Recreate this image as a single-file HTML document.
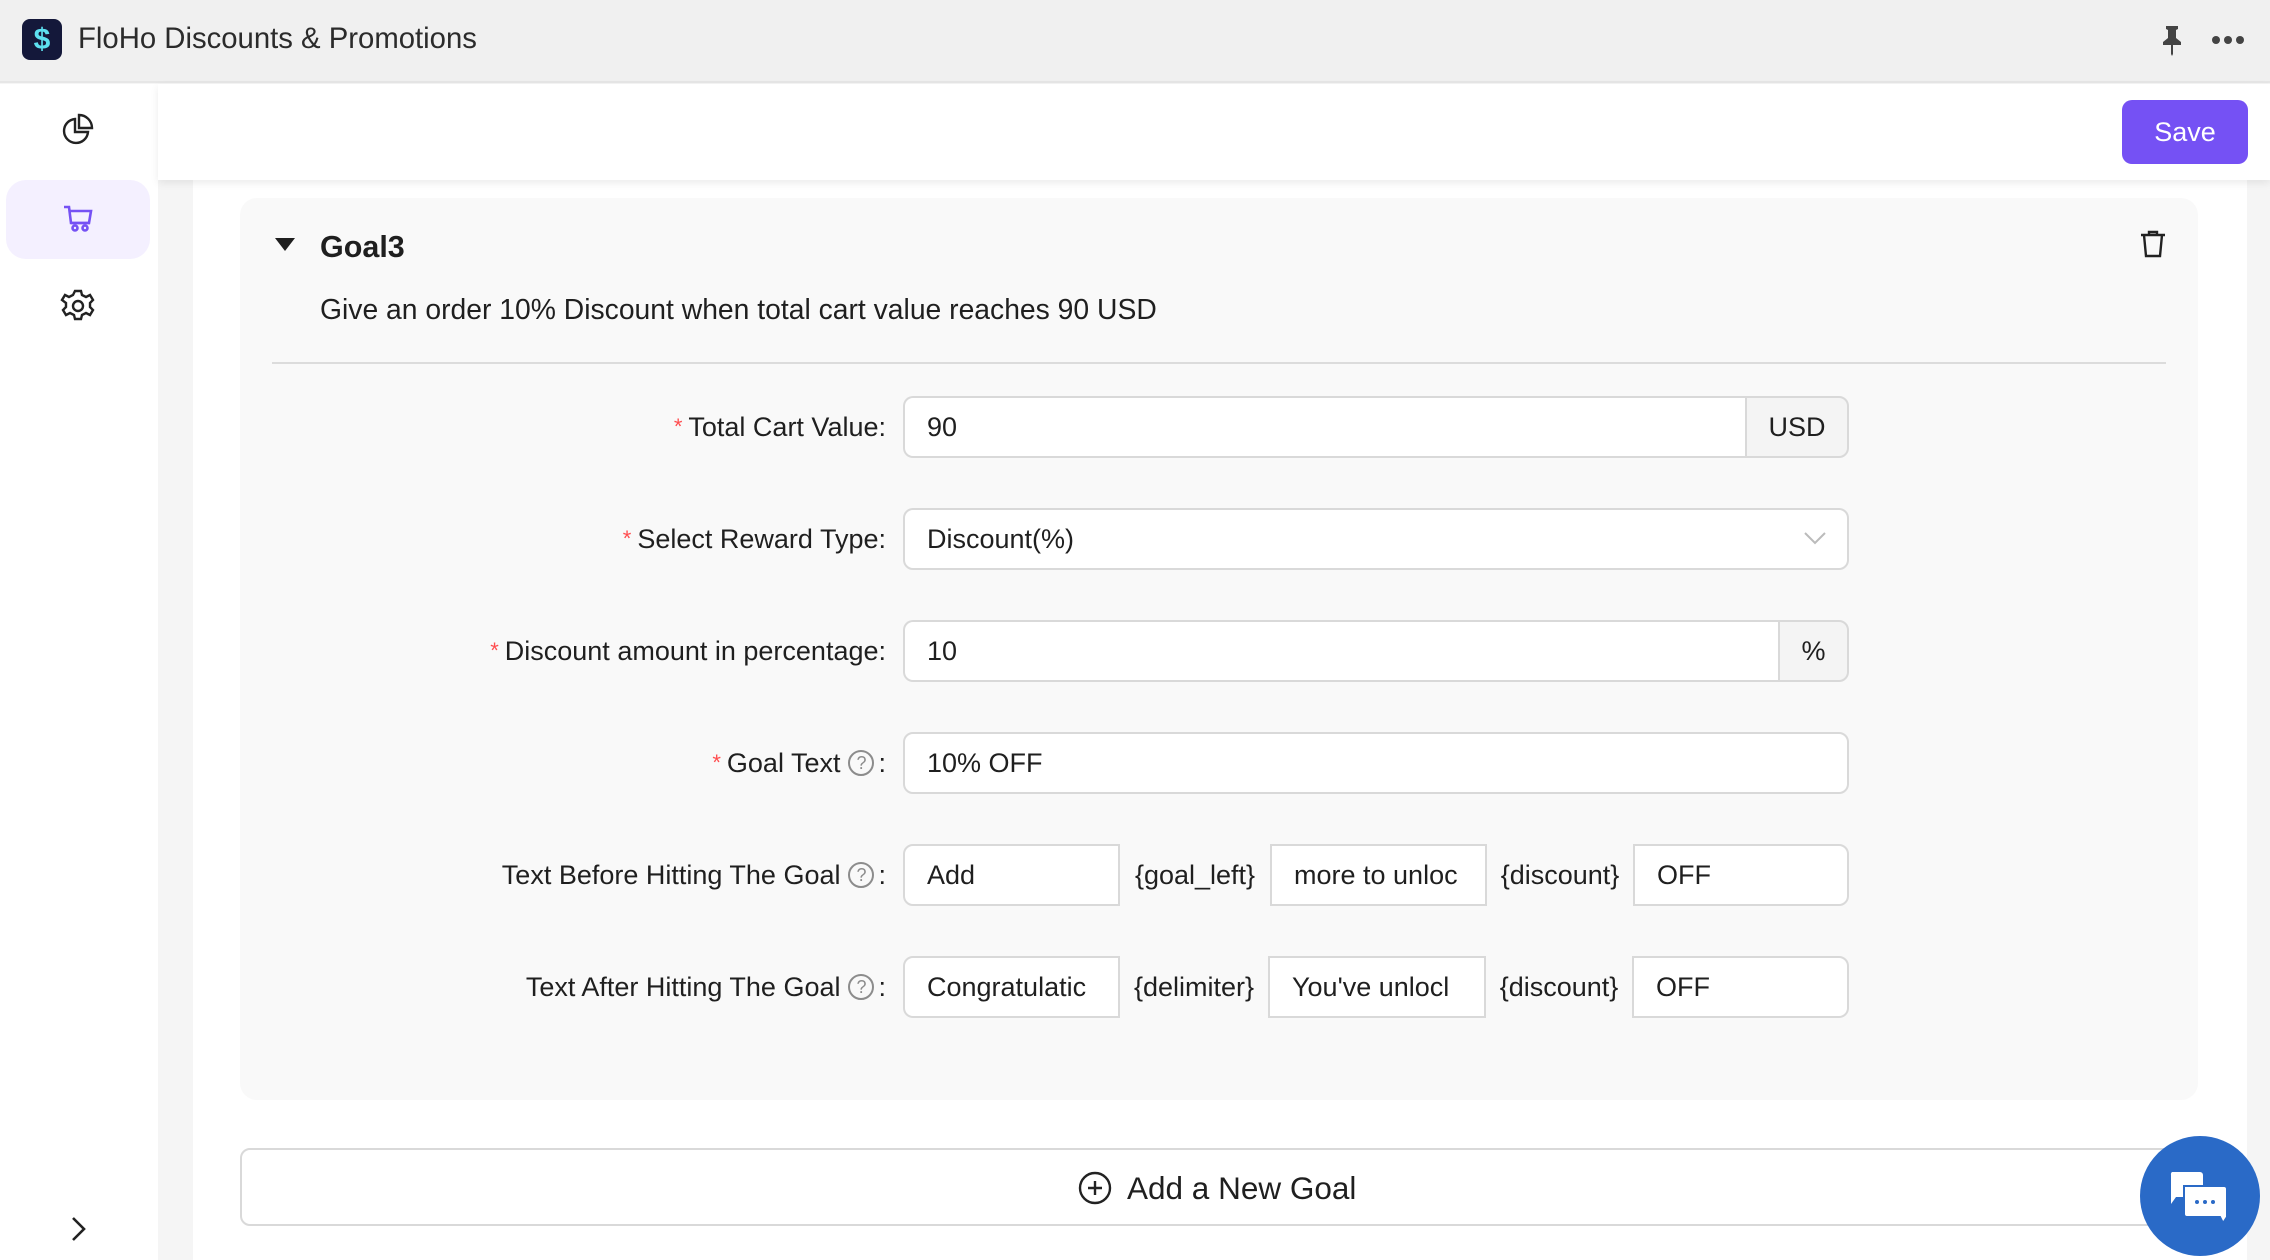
<!DOCTYPE html>
<html><head><meta charset="utf-8"><style>
*{box-sizing:border-box;margin:0;padding:0}
body{width:2270px;height:1260px;overflow:hidden;background:#f5f5f5;font-family:"Liberation Sans",sans-serif;color:#1f1f1f;position:relative}
.abs{position:absolute}
.topbar{left:0;top:0;width:2270px;height:83px;background:#f0f0f0;border-bottom:2px solid #e6e6e6}
.side{left:0;top:84px;width:158px;height:1176px;background:#fff}
.content{left:193px;top:180px;width:2054px;height:1080px;background:#fff}
.header{left:158px;top:84px;width:2112px;height:96px;background:#fff;box-shadow:0 3px 8px rgba(0,0,0,.08)}
.save{left:2122px;top:100px;width:126px;height:64px;background:#7551f4;border-radius:10px;color:#fff;font-size:27px;display:flex;align-items:center;justify-content:center}
.card{left:240px;top:198px;width:1958px;height:902px;background:#f9f9f9;border-radius:17px}
.lbl{right:1384px;font-size:27px;height:62px;display:flex;align-items:center;white-space:nowrap}
.req{color:#ff4d4f;margin-right:6px;font-size:22px}
.inp{height:62px;border:2px solid #d9d9d9;background:#fff;font-size:27px;display:flex;align-items:center;padding-left:22px;white-space:nowrap;overflow:hidden}
.addon{height:62px;border:2px solid #d9d9d9;background:#f4f4f4;font-size:27px;display:flex;align-items:center;justify-content:center;border-radius:0 10px 10px 0}
.tok{font-size:27px;height:62px;display:flex;align-items:center;justify-content:center}
.q{display:inline-block;width:26px;height:26px;border:2px solid #8c8c8c;border-radius:50%;color:#8c8c8c;font-size:18px;line-height:22px;text-align:center;margin:0 4px 0 8px}
</style></head><body>
<div class="abs topbar"></div>
<div class="abs" style="left:22px;top:19px;width:40px;height:41px;background:#14183a;border-radius:8px;color:#5ee0f0;font-weight:bold;font-size:30px;text-align:center;line-height:41px">$</div>
<div class="abs" style="left:78px;top:22px;font-size:29.3px;color:#2b2b2b">FloHo Discounts &amp; Promotions</div>
<svg class="abs" style="left:2158px;top:24px" width="28" height="32" viewBox="0 0 28 32"><path d="M8 2h12v3l-2 1v8l5 4v3H5v-3l5-4V6L8 5z M13 21h2v9l-1 2-1-2z" fill="#444"/></svg>
<div class="abs" style="left:2212px;top:36px;width:8px;height:8px;border-radius:50%;background:#444;box-shadow:12px 0 #444,24px 0 #444"></div>
<div class="abs side"></div>
<div class="abs content"></div>
<div class="abs header"></div>
<div class="abs save">Save</div>
<svg class="abs" style="left:60px;top:113px" width="34" height="34" viewBox="0 0 34 34" fill="none" stroke="#222" stroke-width="2.4"><path d="M15 6a12 12 0 1 0 13 13H15z"/><path d="M19 2v13h13A13 13 0 0 0 19 2z"/></svg>
<div class="abs" style="left:6px;top:180px;width:144px;height:79px;background:#f4f0ff;border-radius:20px"></div>
<svg class="abs" style="left:63px;top:204px" width="32" height="28" viewBox="0 0 32 28" fill="none" stroke="#7551f4" stroke-width="2.6"><path d="M1 3h5l2 16h18l2-12H7"/><path d="M8 19h19"/><circle cx="12" cy="24" r="2.5"/><circle cx="22" cy="24" r="2.5"/></svg>
<svg class="abs" style="left:60px;top:288px" width="36" height="36" viewBox="0 0 36 36" fill="none" stroke="#222" stroke-width="2.4"><path d="M15 3h6l1 4 4 2 4-2 3 5-3 3v4l3 3-3 5-4-2-4 2-1 4h-6l-1-4-4-2-4 2-3-5 3-3v-4L2 12l3-5 4 2 4-2z"/><circle cx="18" cy="18" r="5"/></svg>
<svg class="abs" style="left:68px;top:1216px" width="20" height="26" viewBox="0 0 20 26" fill="none" stroke="#222" stroke-width="2.6"><path d="M5 2l11 11L5 24"/></svg>
<div class="abs card"></div>
<svg class="abs" style="left:275px;top:238px" width="20" height="14" viewBox="0 0 20 14"><path d="M0 0h20L10 13z" fill="#1f1f1f"/></svg>
<div class="abs" style="left:320px;top:230px;font-size:30.5px;font-weight:bold">Goal3</div>
<svg class="abs" style="left:2140px;top:230px" width="26" height="28" viewBox="0 0 26 28" fill="none" stroke="#222" stroke-width="2.4"><path d="M1 5h24M9 5V2h8v3M4 5l2 21h14l2-21"/></svg>
<div class="abs" style="left:320px;top:293px;font-size:28.3px">Give an order 10% Discount when total cart value reaches 90 USD</div>
<div class="abs" style="left:272px;top:362px;width:1894px;height:2px;background:#dcdcdc"></div>

<div class="abs lbl" style="top:396px"><span class="req">*</span>Total Cart Value:</div>
<div class="abs inp" style="left:903px;top:396px;width:844px;border-radius:10px 0 0 10px;border-right:none">90</div>
<div class="abs addon" style="left:1745px;top:396px;width:104px">USD</div>

<div class="abs lbl" style="top:508px"><span class="req">*</span>Select Reward Type:</div>
<div class="abs inp" style="left:903px;top:508px;width:946px;border-radius:10px">Discount(%)</div>
<svg class="abs" style="left:1804px;top:531px" width="22" height="14" viewBox="0 0 22 14" fill="none" stroke="#bbb" stroke-width="2"><path d="M1 2l10 10L21 2"/></svg>

<div class="abs lbl" style="top:620px"><span class="req">*</span>Discount amount in percentage:</div>
<div class="abs inp" style="left:903px;top:620px;width:877px;border-radius:10px 0 0 10px;border-right:none">10</div>
<div class="abs addon" style="left:1778px;top:620px;width:71px">%</div>

<div class="abs lbl" style="top:732px"><span class="req">*</span>Goal Text<span class="q">?</span>:</div>
<div class="abs inp" style="left:903px;top:732px;width:946px;border-radius:10px">10% OFF</div>

<div class="abs lbl" style="top:844px">Text Before Hitting The Goal<span class="q">?</span>:</div>
<div class="abs inp" style="left:903px;top:844px;width:217px;border-radius:10px 0 0 10px">Add</div>
<div class="abs tok" style="left:1120px;top:844px;width:150px">{goal_left}</div>
<div class="abs inp" style="left:1270px;top:844px;width:217px">more to unloc</div>
<div class="abs tok" style="left:1487px;top:844px;width:146px">{discount}</div>
<div class="abs inp" style="left:1633px;top:844px;width:216px;border-radius:0 10px 10px 0">OFF</div>

<div class="abs lbl" style="top:956px">Text After Hitting The Goal<span class="q">?</span>:</div>
<div class="abs inp" style="left:903px;top:956px;width:217px;border-radius:10px 0 0 10px">Congratulatic</div>
<div class="abs tok" style="left:1120px;top:956px;width:148px">{delimiter}</div>
<div class="abs inp" style="left:1268px;top:956px;width:218px">You've unlocl</div>
<div class="abs tok" style="left:1486px;top:956px;width:146px">{discount}</div>
<div class="abs inp" style="left:1632px;top:956px;width:217px;border-radius:0 10px 10px 0">OFF</div>

<div class="abs" style="left:240px;top:1148px;width:1980px;height:78px;border:2px solid #d9d9d9;border-radius:10px;background:#fff"></div>
<svg class="abs" style="left:1078px;top:1171px" width="34" height="34" viewBox="0 0 34 34" fill="none" stroke="#222" stroke-width="2.4"><circle cx="17" cy="17" r="15"/><path d="M17 10v14M10 17h14"/></svg>
<div class="abs" style="left:1127px;top:1170px;font-size:31.5px">Add a New Goal</div>
<div class="abs" style="left:2140px;top:1136px;width:120px;height:120px;border-radius:50%;background:#2a6ac7"></div>
<svg class="abs" style="left:2168px;top:1170px" width="64" height="56" viewBox="0 0 64 56"><path d="M4 2h28a3 3 0 0 1 3 3v22H8l-5 7V5a3 3 0 0 1 1-3z" fill="#fff"/><path d="M16 16h40a3 3 0 0 1 3 3v28l-4 6-3-6H19a3 3 0 0 1-3-3z" fill="#fff" stroke="#2a6ac7" stroke-width="2"/><circle cx="29" cy="32" r="2" fill="#2a6ac7"/><circle cx="37" cy="32" r="2" fill="#2a6ac7"/><circle cx="45" cy="32" r="2" fill="#2a6ac7"/></svg>
</body></html>
